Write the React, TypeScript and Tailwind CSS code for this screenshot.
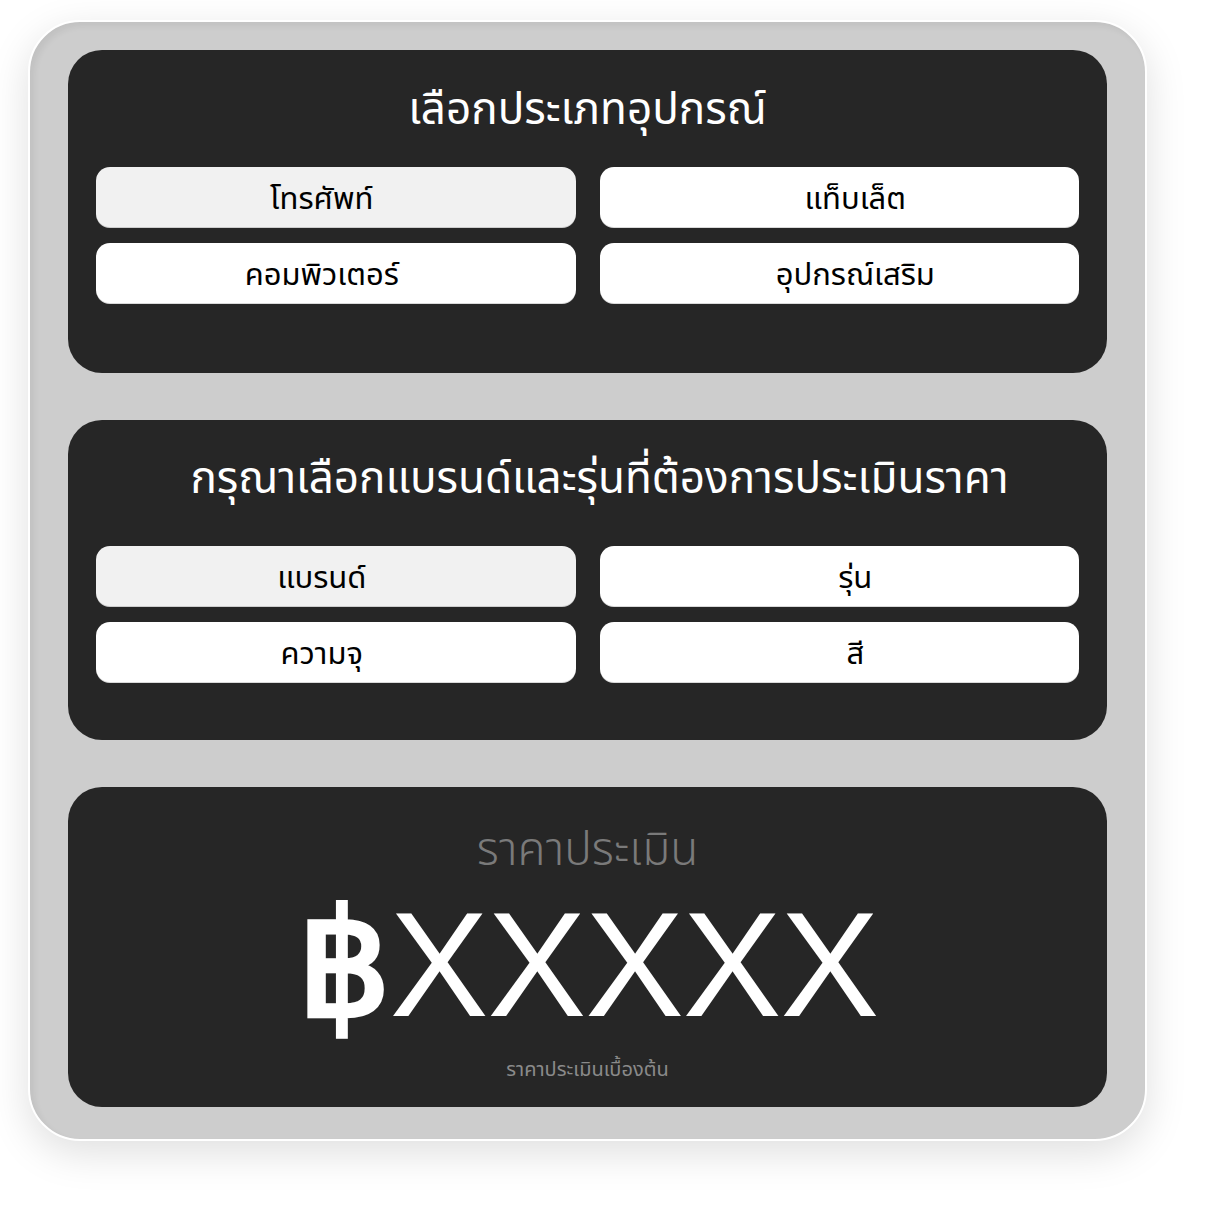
import React from "react";

const thai = { fontFamily: '"Noto Sans Thai", "Noto Sans Thai Looped", "Noto Sans", "DejaVu Sans", sans-serif' };

function Option({ label, active, side }: { label: string; active?: boolean; side: "l" | "r" }) {
  return (
    <button
      className={
        "h-[61px] rounded-[14px] text-[31px] text-black flex items-center justify-center pt-[5px] shadow-[inset_0_-1px_0_rgba(0,0,0,0.15)] " +
        (side === "l" ? "pr-[28px] " : "pl-[32px] ") +
        (active ? "bg-[#f1f1f1]" : "bg-white")
      }
      style={thai}
    >
      {label}
    </button>
  );
}

function Grid({ items }: { items: string[] }) {
  return (
    <div className="grid grid-cols-2 gap-x-[24px] gap-y-[15px]">
      {items.map((o, i) => (
        <Option key={o} label={o} active={i === 0} side={i % 2 === 0 ? "l" : "r"} />
      ))}
    </div>
  );
}

export default function App() {
  return (
    <div className="w-[1226px] h-[1222px] bg-white relative">
      <div className="absolute left-[28px] top-[20px] w-[1119px] h-[1121px] rounded-[52px] bg-[#cdcdcd] border-2 border-white shadow-[0_12px_40px_rgba(0,0,0,0.13),inset_4px_4px_6px_rgba(0,0,0,0.06)] px-[38px] pt-[28px] flex flex-col gap-[47px]">
        <section className="bg-[#262626] rounded-[34px] px-[28px] h-[323px] flex flex-col">
          <h2 className="text-white text-[44px] text-center leading-none mt-[39px] mb-[34px]" style={thai}>
            เลือกประเภทอุปกรณ์
          </h2>
          <Grid items={["โทรศัพท์", "แท็บเล็ต", "คอมพิวเตอร์", "อุปกรณ์เสริม"]} />
        </section>
        <section className="bg-[#262626] rounded-[34px] px-[28px] h-[320px] flex flex-col">
          <h2 className="text-white text-[44px] text-center leading-none mt-[38px] mb-[44px] pl-[24px]" style={thai}>
            กรุณาเลือกแบรนด์และรุ่นที่ต้องการประเมินราคา
          </h2>
          <Grid items={["แบรนด์", "รุ่น", "ความจุ", "สี"]} />
        </section>
        <section className="bg-[#262626] rounded-[34px] h-[320px] flex flex-col items-center">
          <p className="text-[#7a7a7a] text-[46px] font-light leading-none mt-[41px]" style={thai}>
            ราคาประเมิน
          </p>
          <p
            className="text-white text-[148px] leading-[140px] mt-[21px] tracking-[-1px]"
            style={{ fontFamily: '"Liberation Sans", Arial, sans-serif' }}
          >
            <span className="font-bold">฿</span>XXXXX
          </p>
          <p className="text-[#8a8a8a] text-[20px] leading-none mt-[25px]" style={thai}>
            ราคาประเมินเบื้องต้น
          </p>
        </section>
      </div>
    </div>
  );
}
